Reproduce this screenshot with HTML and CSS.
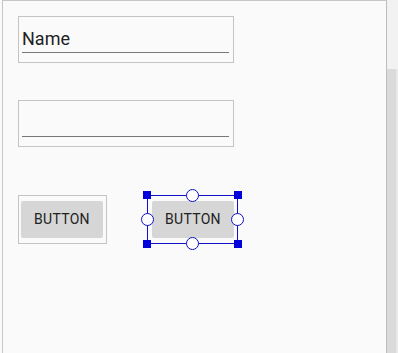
FILE: index.html
```html
<!DOCTYPE html>
<html lang="en">
<head>
  <meta charset="UTF-8">
  <title>Layout editor</title>
  <meta name="viewport" content="width=device-width, initial-scale=1.0">
  <link rel="stylesheet" href="styles.css">
</head>
<body>

<div class="editor">
  <div class="canvas">
    <div class="field">
      <div class="field-input">Name</div>
    </div>

    <div class="field field-second">
      <div class="field-input"></div>
    </div>

    <div class="button-row">
      <div class="widget">
        <div class="btn">BUTTON</div>
      </div>

      <div class="widget selected">
        <div class="btn">BUTTON</div>
        <span class="handle square tl"></span>
        <span class="handle square tr"></span>
        <span class="handle square bl"></span>
        <span class="handle square br"></span>
        <span class="handle round top"></span>
        <span class="handle round bottom"></span>
        <span class="handle round left"></span>
        <span class="handle round right"></span>
      </div>
    </div>
  </div>

  <div class="scrollbar">
    <div class="scroll-top"></div>
    <div class="scroll-track"></div>
  </div>
</div>

</body>
</html>
```

FILE: styles.css
```css
* { box-sizing: border-box; }
html, body {
  margin: 0;
  height: 100%;
}
body {
  background: #fafafa;
  font-family: Roboto, 'Liberation Sans', sans-serif;
  color: #222;
  overflow: hidden;
}
.editor {
  display: flex;
  height: 100%;
}
.canvas {
  flex: 1;
  margin-left: 2px;
  border-left: 1px solid #c6c6c6;
  border-top: 1px solid #c6c6c6;
  border-right: 1px solid #bdbdbd;
  padding: 15px 0 0 15px;
  background: #fafafa;
}
.field {
  width: 216px;
  height: 47px;
  border: 1px solid #c4c4c4;
  padding: 8px 4px 0 3px;
}
.field-second {
  margin-top: 37px;
}
.field-input {
  height: 28px;
  border-bottom: 1px solid #777;
  font-size: 18px;
  line-height: 28px;
  padding-left: 0;
}
.button-row {
  display: flex;
  gap: 40px;
  margin-top: 48px;
}
.widget {
  position: relative;
  width: 89px;
  height: 49px;
  border: 1px solid #c4c4c4;
  padding: 5px 3px 0 2px;
}
.btn {
  height: 37px;
  background: #d6d6d6;
  border-radius: 2px;
  font-size: 14px;
  line-height: 37px;
  text-align: center;
  letter-spacing: 0.3px;
}
.widget.selected {
  width: 91px;
  border: 1px solid #1010c8;
  padding: 5px 3px 0 4px;
}
.handle {
  position: absolute;
  background: #0000dd;
}
.handle.square {
  width: 8px;
  height: 8px;
}
.handle.tl { left: -5px; top: -5px; }
.handle.tr { right: -5px; top: -5px; }
.handle.bl { left: -5px; bottom: -5px; }
.handle.br { right: -5px; bottom: -5px; }
.handle.round {
  width: 13px;
  height: 13px;
  border-radius: 50%;
  background: #fff;
  border: 1px solid #1010c8;
}
.handle.top { top: -7px; left: 38px; }
.handle.bottom { bottom: -7px; left: 38px; }
.handle.left { left: -7px; top: 17px; }
.handle.right { right: -7px; top: 17px; }
.scrollbar {
  width: 11px;
  display: flex;
  flex-direction: column;
}
.scroll-top {
  height: 69px;
  background: #f2f2f2;
}
.scroll-track {
  flex: 1;
  background: #dadada;
  border-right: 2px solid #e8e8e8;
}
```
